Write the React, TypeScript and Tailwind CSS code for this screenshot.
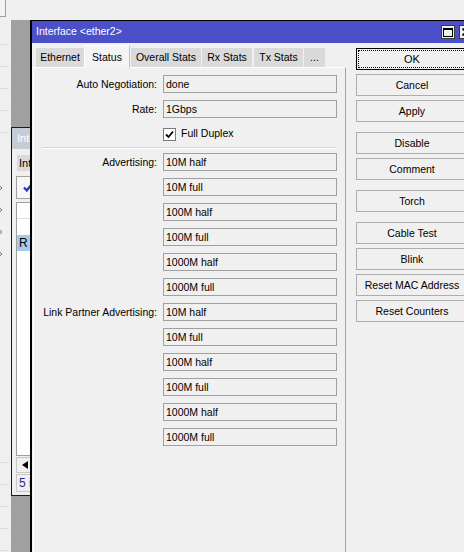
import React from 'react';

const FieldRow: React.FC<{ label?: string; value: string }> = ({ label, value }) => (
  <div className="flex items-center h-[18px] mb-[7px]">
    <div className="w-[123px] text-right whitespace-nowrap leading-[18px]">{label}</div>
    <div className="ml-[6px] w-[174px] h-[18px] border border-[#a0a0a0] bg-[#f0f0f0] pl-[2px] leading-[16px] whitespace-nowrap">
      {value}
    </div>
  </div>
);

const Btn: React.FC<{ label: string; focus?: boolean; className?: string }> = ({ label, focus, className = '' }) =>
  focus ? (
    <div className={`h-[22px] border border-black p-[1px] bg-[#f0f0f0] ${className}`}>
      <div className="w-full h-full border border-dotted border-black flex items-center justify-center pt-[1px] text-[11px]">{label}</div>
    </div>
  ) : (
    <div className={`h-[22px] border border-[#adadad] bg-[#f0f0f0] flex items-center justify-center pt-[2px] whitespace-nowrap ${className}`}>
      {label}
    </div>
  );

const tabs = [
  { label: 'Ethernet', w: 'w-[48px]', ml: '' },
  { label: 'Status', w: 'w-[46px]', ml: '', active: true },
  { label: 'Overall Stats', w: 'w-[70px]', ml: 'ml-[1px]' },
  { label: 'Rx Stats', w: 'w-[50px]', ml: 'ml-[1px]' },
  { label: 'Tx Stats', w: 'w-[49px]', ml: 'ml-[2px]' },
  { label: '...', w: 'w-[21px]', ml: 'ml-[1px]' },
];

const speeds = ['10M half', '10M full', '100M half', '100M full', '1000M half', '1000M full'];

// left menu rows: which ones show a line / arrow
const menuRows = Array.from({ length: 24 }, (_, i) => ({
  line: i <= 4 || i >= 19,
  arrow: i >= 7 && i <= 10,
}));

export default function App() {
  return (
    <div className="relative w-[464px] h-[552px] overflow-hidden bg-[#f0f0f0] font-['Liberation_Sans',Arial,sans-serif] text-[10.5px] text-black">
      {/* main menu strip on the far left */}
      <div className="absolute left-0 top-0 w-[11px] h-full flex flex-col">
        <div className="w-[6px] h-[17px] border-r border-b border-[#a0a0a0] bg-[#f4f4f4]" />
        <div className="mt-[6px] flex flex-col">
          {menuRows.map((r, i) => (
            <div key={i} className={`h-[22px] w-[9px] flex items-center ${r.line ? 'border-b border-[#dcdcdc]' : ''}`}>
              {r.arrow && (
                <svg width="4" height="8" viewBox="0 0 4 8">
                  <polyline points="-2,0.5 2,4 -2,7.5" fill="none" stroke="#707070" strokeWidth="1" />
                </svg>
              )}
            </div>
          ))}
        </div>
      </div>

      {/* MDI workspace */}
      <div className="absolute left-[11px] top-[20px] w-[21px] bottom-0 bg-[#a0a0a0]" />

      {/* background window: Interface List */}
      <div className="absolute left-[11px] top-[127px] w-[60px] h-[369px] border border-[#1c1c1c] bg-[#f0f0f0] flex flex-col">
        <div className="h-[21px] bg-[#c5ccd8] text-white text-[11px] pl-[5px] flex items-center whitespace-nowrap">Interface List</div>
        <div className="mt-[6px] ml-[5px] h-[16px] bg-[#dadada] pl-[2px] leading-[16px] text-[11px] whitespace-nowrap">Interface</div>
        <div className="mt-[5px] ml-[4px] h-[23px] w-[40px] border border-[#a0a0a0] bg-[#f7f7f7] flex items-center pl-[6px]">
          <svg width="10" height="9" viewBox="0 0 10 9">
            <path d="M1 4.5 L3.8 7.5 L9 1" fill="none" stroke="#1c35d6" strokeWidth="2.2" />
          </svg>
        </div>
        <div className="mt-[3px] ml-[4px] flex-1 border border-[#a0a0a0] bg-white flex flex-col">
          <div className="h-[16px] border-b border-[#e0e0e0]" />
          <div className="h-[16px]" />
          <div className="h-[16px] bg-[#a8c9ec] pl-[2px] leading-[16px] text-[12px]">R</div>
        </div>
        <div className="ml-[4px] mt-[1px] h-[16px] border border-[#c8c8c8] bg-[#f0f0f0] flex items-center pl-[5px]">
          <svg width="6" height="8" viewBox="0 0 6 8">
            <polygon points="6,0 6,8 0,4" fill="#000" />
          </svg>
        </div>
        <div className="ml-[4px] mt-[1px] mb-[3px] h-[18px] border border-[#c8c8c8] pl-[2px] leading-[16px] text-[12px] text-[#1b2d86] whitespace-nowrap">
          5 items
        </div>
      </div>

      {/* main window: Interface <ether2> */}
      <div className="absolute left-[30px] top-[20px] w-[448px] h-[540px] border-l-2 border-t border-black bg-[#f0f0f0] flex flex-col">
        <div className="h-[22px] bg-[#4b4fc8] text-white flex items-center pl-[4px]">
          <span className="whitespace-nowrap">Interface &lt;ether2&gt;</span>
          <div className="ml-auto flex gap-[4px] pr-[5px]">
            <div className="w-[14px] h-[14px] border border-[#3a3a3a] bg-[#f0f0f0] flex items-center justify-center">
              <svg width="10" height="9" viewBox="0 0 10 9">
                <rect x="0.5" y="0.5" width="9" height="8" fill="none" stroke="#000" />
                <rect x="0" y="0" width="10" height="2" fill="#000" />
              </svg>
            </div>
            <div className="w-[14px] h-[14px] border border-[#3a3a3a] bg-[#f0f0f0] flex items-center justify-center">
              <svg width="8" height="8" viewBox="0 0 8 8">
                <path d="M0.5 0.5 L7.5 7.5 M7.5 0.5 L0.5 7.5" stroke="#000" strokeWidth="1.6" />
              </svg>
            </div>
          </div>
        </div>

        <div className="flex flex-1">
          {/* tabs + panel */}
          <div className="ml-[1px] w-[313px] flex flex-col pt-[2px]">
            <div className="relative z-10 -mb-px h-[23px] flex items-end pl-[3px]">
              {tabs.map((t) =>
                t.active ? (
                  <div
                    key={t.label}
                    className={`${t.w} ${t.ml} h-[23px] bg-[#f4f4f4] border-l border-t border-white border-r border-r-[#c4c4c4] flex items-start justify-center pt-[4px] whitespace-nowrap`}
                  >
                    {t.label}
                  </div>
                ) : (
                  <div
                    key={t.label}
                    className={`${t.w} ${t.ml} h-[19px] mb-px bg-[#dadada] flex items-center justify-center whitespace-nowrap`}
                  >
                    {t.label}
                  </div>
                )
              )}
            </div>
            <div className="flex-1 border-l border-t border-white border-r border-r-[#a0a0a0] pt-[7px]">
              <FieldRow label="Auto Negotiation:" value="done" />
              <FieldRow label="Rate:" value="1Gbps" />
              <div className="flex items-center h-[18px] mb-[4px] pl-[129px]">
                <div className="w-[13px] h-[13px] border border-[#7a7a7a] bg-white flex items-center justify-center">
                  <svg width="9" height="9" viewBox="0 0 9 9">
                    <path d="M1 4.5 L3.5 7 L8 1.5" fill="none" stroke="#000" strokeWidth="1.8" />
                  </svg>
                </div>
                <span className="ml-[5px] whitespace-nowrap">Full Duplex</span>
              </div>
              <div className="ml-[8px] w-[295px] border-t border-[#d5d5d5] border-b border-b-white mb-[4px]" />
              {speeds.map((s, i) => (
                <FieldRow key={'a' + s} label={i === 0 ? 'Advertising:' : ''} value={s} />
              ))}
              {speeds.map((s, i) => (
                <FieldRow key={'l' + s} label={i === 0 ? 'Link Partner Advertising:' : ''} value={s} />
              ))}
            </div>
          </div>

          {/* buttons */}
          <div className="ml-[10px] w-[112px] pt-[5px] flex flex-col">
            <Btn label="OK" focus />
            <Btn label="Cancel" className="mt-[4px]" />
            <Btn label="Apply" className="mt-[4px]" />
            <Btn label="Disable" className="mt-[10px]" />
            <Btn label="Comment" className="mt-[4px]" />
            <Btn label="Torch" className="mt-[10px]" />
            <Btn label="Cable Test" className="mt-[10px]" />
            <Btn label="Blink" className="mt-[4px]" />
            <Btn label="Reset MAC Address" className="mt-[4px]" />
            <Btn label="Reset Counters" className="mt-[4px]" />
          </div>
        </div>
      </div>
    </div>
  );
}
